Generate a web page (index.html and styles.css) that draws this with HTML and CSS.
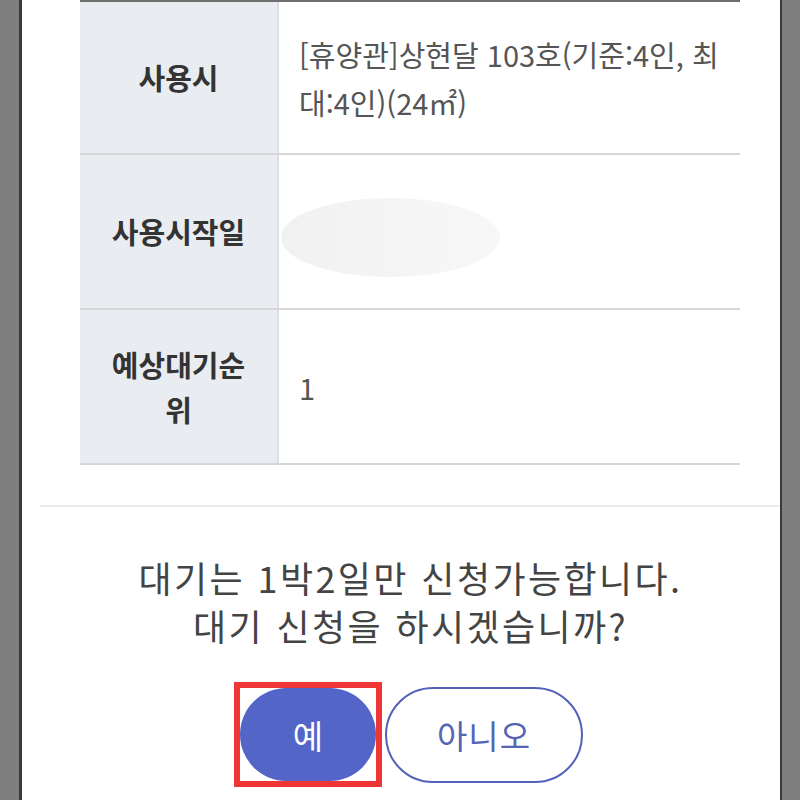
FILE: index.html
```html
<!DOCTYPE html>
<html lang="ko">
<head>
<meta charset="utf-8">
<link rel="stylesheet" href="styles.css">
</head>
<body>
<div class="frame">
  <div class="panel">
    <div class="table">
      <div class="row">
        <div class="th">사용시</div>
        <div class="td">[휴양관]상현달 103호(기준:4인, 최대:4인)(24㎡)</div>
      </div>
      <div class="row">
        <div class="th">사용시작일</div>
        <div class="td"><span class="blur"></span></div>
      </div>
      <div class="row">
        <div class="th">예상대기순위</div>
        <div class="td">1</div>
      </div>
    </div>
    <div class="divider"></div>
    <div class="message">
      <p>대기는 1박2일만 신청가능합니다.</p>
      <p>대기 신청을 하시겠습니까?</p>
    </div>
    <div class="actions">
      <span class="highlight"><button class="btn btn-yes">예</button></span>
      <button class="btn btn-no">아니오</button>
    </div>
  </div>
</div>
</body>
</html>
```

FILE: styles.css
```css
* { box-sizing: border-box; }
html, body {
  margin: 0;
  padding: 0;
  height: 800px;
  overflow: hidden;
  background: #7f7f7f;
  font-family: "Noto Sans CJK KR", "Noto Sans", sans-serif;
}
.frame {
  height: 800px;
  padding-left: 19px;
}
.panel {
  width: 763px;
  height: 800px;
  background: #ffffff;
  border-left: 3px solid #3a3a3a;
  border-right: 2px solid #3a3a3a;
}
.table {
  margin-left: 58px;
  width: 660px;
  border-top: 2px solid #6e6e6e;
}
.row {
  display: flex;
  height: 155px;
  border-bottom: 2px solid #d6d6d8;
}
.row:first-child { height: 153px; }
.th {
  width: 199px;
  flex: none;
  background: #e9ecf1;
  border-right: 2px solid #dcdfe5;
  display: flex;
  align-items: center;
  justify-content: center;
  text-align: center;
  padding: 0 26px;
  font-size: 29px;
  font-weight: 700;
  line-height: 45px;
  color: #333333;
}
.td {
  flex: 1;
  display: flex;
  align-items: center;
  padding: 0 20px 0 20px;
  font-size: 29px;
  line-height: 48px;
  color: #555555;
}
.blur {
  display: block;
  width: 219px;
  height: 79px;
  margin-left: -18px;
  margin-top: 12px;
  border-radius: 50%;
  background: linear-gradient(90deg, #f1f1f1, #f5f5f5 60%, #f7f7f7);
}
.divider {
  margin: 40px 0 0 18px;
  height: 2px;
  background: #ececec;
}
.message {
  padding-top: 46px;
  padding-left: 19px;
  text-align: center;
  font-size: 36px;
  letter-spacing: 2.4px;
  word-spacing: 0;
  line-height: 48px;
  color: #444444;
}
.message p { margin: 0; }
.actions {
  display: flex;
  justify-content: center;
  align-items: center;
  gap: 3px;
  margin-top: 33px;
  padding-left: 15px;
}
.highlight {
  display: block;
  border: 6px solid #ee3636;
}
.btn {
  display: block;
  font-family: inherit;
  font-size: 33px;
  border-radius: 48px;
  padding: 0;
  margin: 0;
}
.btn-yes {
  width: 136px;
  height: 93px;
  background: #5366c7;
  border: none;
  color: #ffffff;
}
.btn-no {
  width: 198px;
  height: 96px;
  background: #ffffff;
  border: 2px solid #5163b8;
  color: #5565b4;
  letter-spacing: 1px;
}
```
